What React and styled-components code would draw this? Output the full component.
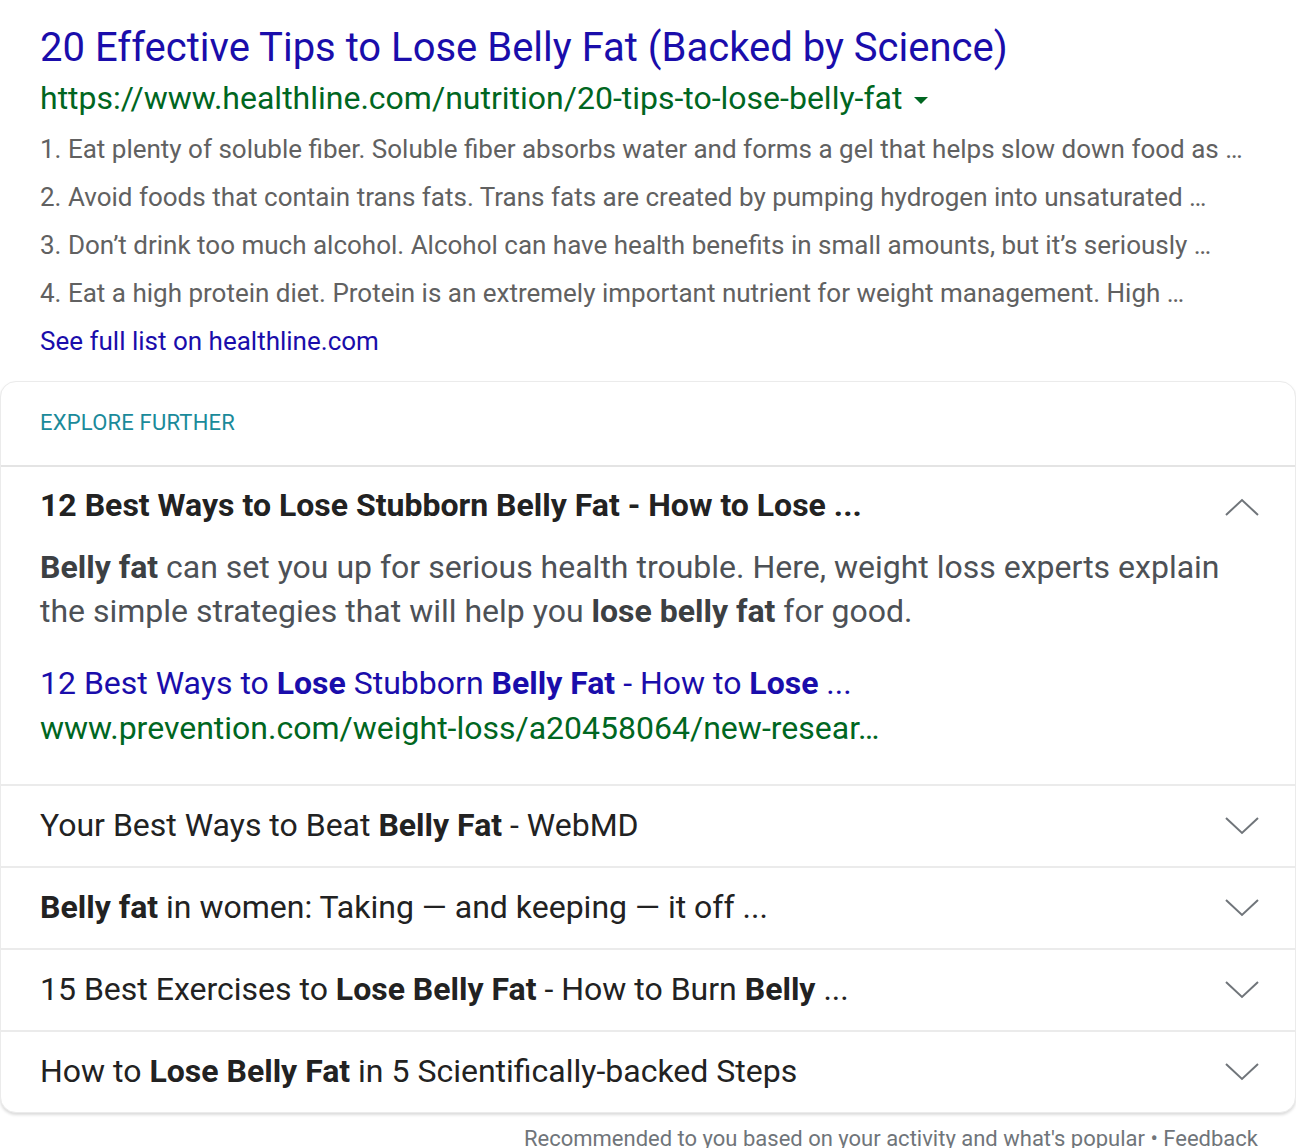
import React from "react"
import styled, { createGlobalStyle } from "styled-components"

const GlobalStyle = createGlobalStyle`
  html, body {
    margin: 0;
    padding: 0;
    background: #fff;
  }
  body {
    font-family: Roboto, "Liberation Sans", Arial, sans-serif;
    -webkit-font-smoothing: antialiased;
  }
`

const snippets = [
  "1. Eat plenty of soluble fiber. Soluble fiber absorbs water and forms a gel that helps slow down food as …",
  "2. Avoid foods that contain trans fats. Trans fats are created by pumping hydrogen into unsaturated …",
  "3. Don\u2019t drink too much alcohol. Alcohol can have health benefits in small amounts, but it\u2019s seriously …",
  "4. Eat a high protein diet. Protein is an extremely important nutrient for weight management. High …",
]

const related = [
  <>Your Best Ways to Beat <b>Belly Fat</b> - WebMD</>,
  <><b>Belly fat</b> in women: Taking — and keeping — it off ...</>,
  <>15 Best Exercises to <b>Lose Belly Fat</b> - How to Burn <b>Belly</b> ...</>,
  <>How to <b>Lose Belly Fat</b> in 5 Scientifically-backed Steps</>,
]

const Chevron = ({ up }) => (
  <svg width="34" height="18" viewBox="0 0 34 18" fill="none">
    <path
      d={up ? "M1 17 L17 2 L33 17" : "M1 1 L17 16 L33 1"}
      stroke="#70757a"
      strokeWidth="2"
    />
  </svg>
)

const App = () => {
  return (
    <Page>
      <GlobalStyle />
      <Result>
        <Title href="#">20 Effective Tips to Lose Belly Fat (Backed by Science)</Title>
        <UrlLine>
          https://www.healthline.com/nutrition/20-tips-to-lose-belly-fat
          <Caret />
        </UrlLine>
        <Snippets>
          {snippets.map((s) => (
            <li key={s}>{s}</li>
          ))}
        </Snippets>
        <MoreLink href="#">See full list on healthline.com</MoreLink>
      </Result>

      <Card>
        <CardHeader>EXPLORE FURTHER</CardHeader>
        <Expanded>
          <RowHead>
            <ExpandedTitle>12 Best Ways to Lose Stubborn Belly Fat - How to Lose ...</ExpandedTitle>
            <Chevron up />
          </RowHead>
          <Body>
            <b>Belly fat</b> can set you up for serious health trouble. Here, weight loss experts explain
            the simple strategies that will help you <b>lose belly fat</b> for good.
          </Body>
          <SubLink href="#">
            12 Best Ways to <b>Lose</b> Stubborn <b>Belly Fat</b> - How to <b>Lose</b> ...
          </SubLink>
          <SubUrl>www.prevention.com/weight-loss/a20458064/new-resear…</SubUrl>
        </Expanded>
        {related.map((r, i) => (
          <Row key={i}>
            <RowText>{r}</RowText>
            <Chevron />
          </Row>
        ))}
      </Card>
      <Footer>Recommended to you based on your activity and what's popular • Feedback</Footer>
    </Page>
  )
}

const Page = styled.div`
  width: 1296px;
  padding-top: 22px;
`

const Result = styled.div`
  padding: 0 40px;
  display: flex;
  flex-direction: column;
  align-items: flex-start;
`

const Title = styled.a`
  font-size: 40px;
  line-height: 52px;
  color: #1a0dab;
  text-decoration: none;
`

const UrlLine = styled.div`
  display: flex;
  align-items: center;
  font-size: 32px;
  line-height: 48px;
  color: #006621;
`

const Caret = styled.span`
  width: 0;
  height: 0;
  margin-left: 12px;
  margin-top: 4px;
  border-left: 7px solid transparent;
  border-right: 7px solid transparent;
  border-top: 7px solid #006621;
`

const Snippets = styled.ul`
  list-style: none;
  margin: 3px 0 0;
  padding: 0;
  li {
    font-size: 26px;
    line-height: 48px;
    color: #616161;
    white-space: nowrap;
  }
`

const MoreLink = styled.a`
  font-size: 26px;
  line-height: 48px;
  color: #1a0dab;
  text-decoration: none;
`

const Card = styled.div`
  margin-top: 16px;
  border: 1px solid #ebebeb;
  border-radius: 16px;
  box-shadow: 0 2px 3px rgba(0, 0, 0, 0.14);
  background: #fff;
`

const CardHeader = styled.div`
  padding: 26px 39px 27px;
  font-size: 22px;
  line-height: 30px;
  color: #1a8a9a;
  letter-spacing: 0.2px;
  border-bottom: 2px solid #e4e4e4;
`

const Expanded = styled.div`
  padding: 16px 36px 33px 39px;
  border-bottom: 2px solid #ebebeb;
  svg {
    margin-top: 4px;
  }
`

const RowHead = styled.div`
  display: flex;
  align-items: center;
  justify-content: space-between;
  height: 44px;
`

const ExpandedTitle = styled.div`
  font-size: 32px;
  font-weight: 700;
  color: #222;
`

const Body = styled.p`
  margin: 18px 0 0;
  font-size: 32px;
  line-height: 44px;
  color: #4d5156;
  b {
    color: #3c4043;
  }
`

const SubLink = styled.a`
  display: block;
  margin-top: 28px;
  font-size: 32px;
  line-height: 44px;
  color: #1a0dab;
  text-decoration: none;
`

const SubUrl = styled.div`
  font-size: 32px;
  line-height: 46px;
  color: #006621;
`

const Row = styled.div`
  display: flex;
  align-items: center;
  justify-content: space-between;
  height: 80px;
  padding: 0 36px 0 39px;
  & + & {
    border-top: 2px solid #ebebeb;
  }
`

const RowText = styled.div`
  margin-bottom: 3px;
  font-size: 32px;
  color: #222;
  b {
    font-weight: 700;
  }
`

const Footer = styled.div`
  margin-top: 12px;
  padding-right: 38px;
  text-align: right;
  font-size: 22px;
  line-height: 28px;
  color: #70757a;
`

export default App
